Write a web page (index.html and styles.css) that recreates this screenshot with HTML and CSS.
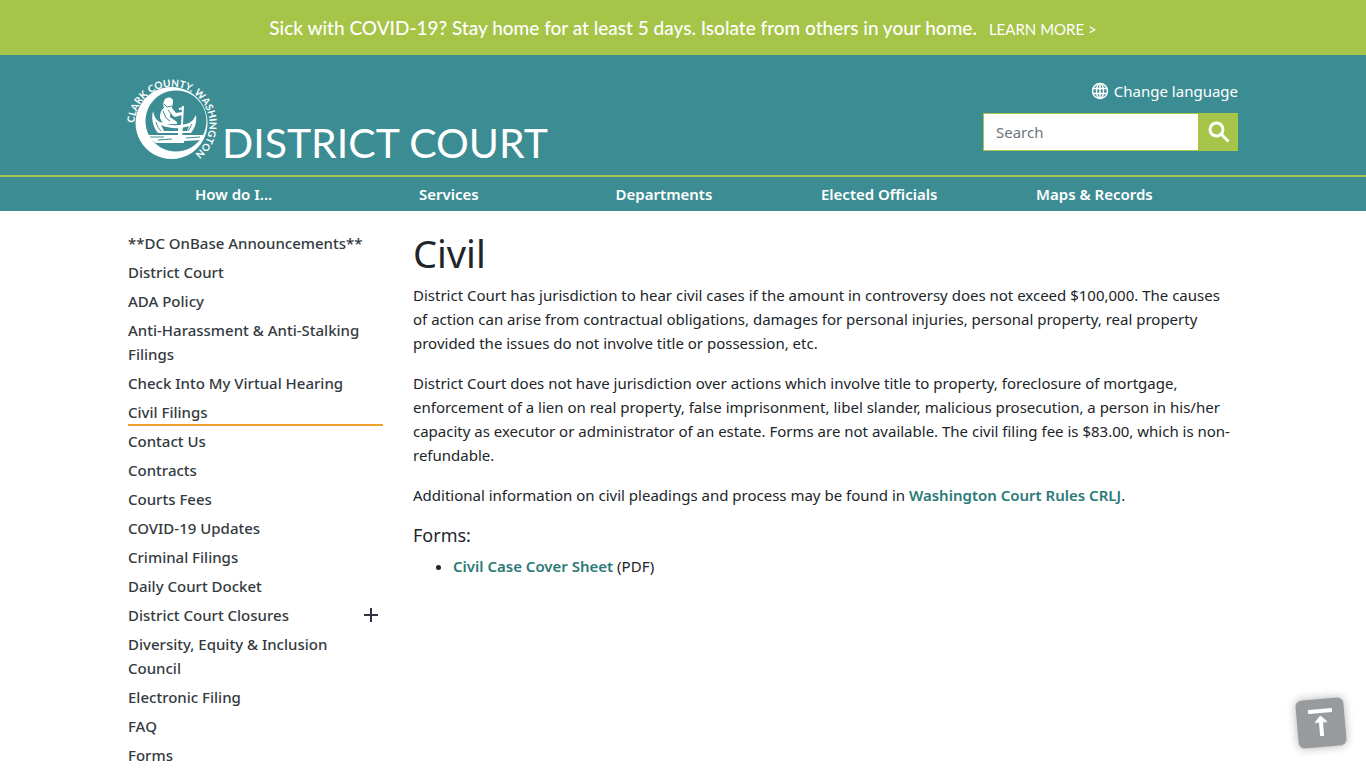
FILE: index.html
```
<!DOCTYPE html>
<html lang="en">
<head>
  <meta charset="UTF-8">
  <meta name="viewport" content="width=device-width, initial-scale=1.0">
  <title>Civil | District Court | Clark County</title>
  <link rel="stylesheet" href="styles.css">
</head>
<body>
  <div class="alert-banner">
    <span>Sick with COVID-19? Stay home for at least 5 days. Isolate from others in your home.</span>
    <a href="#">LEARN MORE &gt;</a>
  </div>

  <header>
    <div class="container header-top">
      <a class="brand" href="#">
        <svg class="logo" viewBox="0 0 90 84" role="img" aria-label="Clark County, Washington">
          <defs>
            <path id="ring" d="M6.500 46A37.500 37.500 0 1 1 68 76"/>
          </defs>
          <text class="logo-text"><textPath href="#ring">CLARK COUNTY, WASHINGTON</textPath></text>
          <path fill="#fff" fill-rule="evenodd" d="M43.500 10a36 36 0 1 0 .1 0zM48 13.500a30.500 30.500 0 1 1-.1 0z"/>
          <!-- water -->
          <path fill="#fff" d="M19 58h56l-1 5-18 1v2H28c-4-2-7-5-9-8z"/>
          <path class="cut" d="M22 60h14M30 63l14-1M58 61l14-1"/>
          <!-- canoe -->
          <path fill="#fff" d="M25 34c1 5 3 9 7 11 9 4 21 4 29 1 4-2 5-5 7-8 1 7-1 13-5 18H30c-5-6-7-14-5-22z"/>
          <path class="hull" d="M33 48c8 4 20 4 28 1l-2 5H36z"/>
          <path class="cut" d="M28 45c1 4 3 7 5 9M64 47l-4 7"/>
          <!-- paddler -->
          <path fill="#fff" d="M36 24c2-5 9-4 9 0 0 3-1 5-1 7l4 5 6-1v3l-7 2-5-3v3l7 5v2H35l-3-6c0-5 1-8 4-10-1-3-1-5 0-7z"/>
          <path class="cut" d="M36 27l3 3 5-1M35 34l3 7 4 3M40 33l4 5"/>
          <path class="line" d="M55 29l-2 36M51 32l5-1"/>
          <path class="line blade" d="M52 48v17"/>
        </svg>
        <span class="site-name">DISTRICT COURT</span>
      </a>

      <div class="tools">
        <a class="language" href="#">
          <svg viewBox="0 0 18 18" aria-hidden="true">
            <circle cx="9" cy="9" r="7.500"/>
            <ellipse cx="9" cy="9" rx="3.500" ry="7.500"/>
            <path d="M9 1.500v15M2 6.500h14M2 11.500h14"/>
          </svg>
          Change language
        </a>
        <form class="search">
          <input type="text" placeholder="Search" aria-label="Search">
          <button type="button" aria-label="Search">
            <svg viewBox="0 0 22 22" aria-hidden="true">
              <circle cx="8.500" cy="8.500" r="6.500"/>
              <path d="M13 13l7.500 7.500"/>
            </svg>
          </button>
        </form>
      </div>
    </div>

    <nav class="main-nav">
      <ul class="nav-list">
        <li><a href="#">How do I...</a></li>
        <li><a href="#">Services</a></li>
        <li><a href="#">Departments</a></li>
        <li><a href="#">Elected Officials</a></li>
        <li><a href="#">Maps &amp; Records</a></li>
      </ul>
    </nav>
  </header>

  <div class="container page">
    <aside>
      <ul class="side-menu">
        <li><a href="#">**DC OnBase Announcements**</a></li>
        <li><a href="#">District Court</a></li>
        <li><a href="#">ADA Policy</a></li>
        <li><a href="#">Anti-Harassment &amp; Anti-Stalking Filings</a></li>
        <li><a href="#">Check Into My Virtual Hearing</a></li>
        <li class="active"><a href="#">Civil Filings</a></li>
        <li><a href="#">Contact Us</a></li>
        <li><a href="#">Contracts</a></li>
        <li><a href="#">Courts Fees</a></li>
        <li><a href="#">COVID-19 Updates</a></li>
        <li><a href="#">Criminal Filings</a></li>
        <li><a href="#">Daily Court Docket</a></li>
        <li>
          <a href="#">District Court Closures</a>
          <button class="expand" type="button" aria-label="Expand District Court Closures">
            <svg viewBox="0 0 14 14" aria-hidden="true"><path d="M7 0v14M0 7h14"/></svg>
          </button>
        </li>
        <li><a href="#">Diversity, Equity &amp; Inclusion Council</a></li>
        <li><a href="#">Electronic Filing</a></li>
        <li><a href="#">FAQ</a></li>
        <li><a href="#">Forms</a></li>
      </ul>
    </aside>

    <main>
      <h1>Civil</h1>
      <p>District Court has jurisdiction to hear civil cases if the amount in controversy does not exceed $100,000. The causes of action can arise from contractual obligations, damages for personal injuries, personal property, real property provided the issues do not involve title or possession, etc.</p>
      <p>District Court does not have jurisdiction over actions which involve title to property, foreclosure of mortgage, enforcement of a lien on real property, false imprisonment, libel slander, malicious prosecution, a person in his/her capacity as executor or administrator of an estate. Forms are not available. The civil filing fee is $83.00, which is non-refundable.</p>
      <p>Additional information on civil pleadings and process may be found in <a href="#">Washington Court Rules CRLJ</a>.</p>
      <h2>Forms:</h2>
      <ul>
        <li><a href="#">Civil Case Cover Sheet</a> (PDF)</li>
      </ul>
    </main>
  </div>

  <button class="back-to-top" type="button" aria-label="Back to top">
    <svg viewBox="0 0 28 32" aria-hidden="true">
      <path d="M2 4h24" stroke-width="4"/>
      <path d="M14 29V12" stroke-width="4"/>
      <path d="M8 15l6-6 6 6z" fill="#fff" stroke-width="1"/>
    </svg>
  </button>
</body>
</html>
```
FILE: styles.css
```
* {
  box-sizing: border-box;
}

body {
  margin: 0;
  font-family: "Noto Sans", "Open Sans", sans-serif;
  font-size: 15px;
  line-height: 24px;
  color: #212529;
  background: #fff;
}

a {
  text-decoration: none;
}

ul {
  margin: 0;
  padding: 0;
  list-style: none;
}

button {
  padding: 0;
  border: 0;
  cursor: pointer;
}

svg {
  display: block;
}

.container {
  max-width: 1140px;
  margin: 0 auto;
  padding: 0 15px;
}

/* banner */
.alert-banner {
  display: flex;
  justify-content: center;
  align-items: baseline;
  gap: 12px;
  padding: 16px 15px 14px;
  background: #a6c447;
  color: #fff;
  font-family: Lato, sans-serif;
  font-size: 19px;
}

.alert-banner span {
  font-weight: 500;
}

.alert-banner a {
  color: #fff;
  font-size: 15px;
}

/* header */
header {
  background: #3c8d93;
}

.header-top {
  display: flex;
  justify-content: space-between;
  min-height: 120px;
}

.brand {
  display: flex;
  align-items: flex-start;
  gap: 4px;
  padding-top: 22px;
  color: #fff;
}

.logo {
  width: 90px;
  height: 84px;
  overflow: visible;
}

.logo-text {
  fill: #fff;
  font-family: Lato, sans-serif;
  font-size: 10px;
  font-weight: bold;
}

.logo .cut {
  fill: none;
  stroke: #3c8d93;
  stroke-width: 1;
}

.logo .hull {
  fill: #3c8d93;
}

.logo .line {
  fill: none;
  stroke: #fff;
  stroke-width: 2;
}

.logo .blade {
  stroke-width: 4;
}

.site-name {
  padding-top: 42px;
  font-family: Lato, sans-serif;
  font-size: 41px;
  line-height: 48px;
}

.tools {
  display: flex;
  flex-direction: column;
  align-items: flex-end;
  gap: 10px;
  padding-top: 24px;
}

.language {
  display: flex;
  align-items: center;
  gap: 5px;
  color: #fff;
}

.language svg {
  width: 18px;
  height: 18px;
  fill: none;
  stroke: #fff;
  stroke-width: 1.5;
}

.search {
  display: flex;
  width: 255px;
  height: 38px;
}

.search input {
  flex: 1;
  min-width: 0;
  padding: 0 12px;
  border: 1px solid #a6c447;
  border-radius: 0;
  font-family: inherit;
  font-size: 15px;
}

.search input::placeholder {
  color: #6c757d;
  opacity: 1;
}

.search button {
  display: flex;
  align-items: center;
  justify-content: center;
  width: 39px;
  background: #a6c447;
}

.search button svg {
  width: 22px;
  height: 22px;
  fill: none;
  stroke: #fff;
  stroke-width: 3;
}

.main-nav {
  border-top: 2px solid #a6c447;
}

.nav-list {
  display: grid;
  grid-template-columns: repeat(5, 1fr);
  max-width: 1140px;
  margin: 0 auto;
  padding: 5px 51px 5px 13px;
  text-align: center;
}

.nav-list a {
  color: #fff;
  font-weight: 600;
}

/* page */
.page {
  display: grid;
  grid-template-columns: 255px 1fr;
  gap: 30px;
  padding-top: 20px;
}

.side-menu li {
  display: flex;
  justify-content: space-between;
  align-items: center;
  margin-bottom: 3px;
  border-bottom: 2px solid transparent;
}

.side-menu .active {
  border-bottom-color: #f0a02f;
}

.side-menu a {
  color: #343a40;
  font-weight: 500;
}

.expand {
  margin-right: 5px;
  background: none;
}

.expand svg {
  width: 14px;
  height: 14px;
  stroke: #343048;
  stroke-width: 2;
}

h1 {
  margin: 0 0 7px;
  font-size: 38px;
  font-weight: 400;
  line-height: 45px;
}

p {
  margin: 0 0 16px;
}

main a {
  color: #2b7a78;
  font-weight: 600;
}

h2 {
  margin: 0 0 7px;
  font-size: 18px;
  font-weight: 400;
  line-height: 24px;
}

main ul {
  padding-left: 40px;
  list-style: disc;
}

.back-to-top {
  position: fixed;
  right: 21px;
  bottom: 21px;
  display: flex;
  align-items: center;
  justify-content: center;
  width: 48px;
  height: 48px;
  border-radius: 6px;
  background: #979b9e;
  box-shadow: 0 0 10px rgba(0, 0, 0, 0.3);
  transform: rotate(-5deg);
}

.back-to-top svg {
  width: 28px;
  height: 32px;
  stroke: #fff;
}
```
